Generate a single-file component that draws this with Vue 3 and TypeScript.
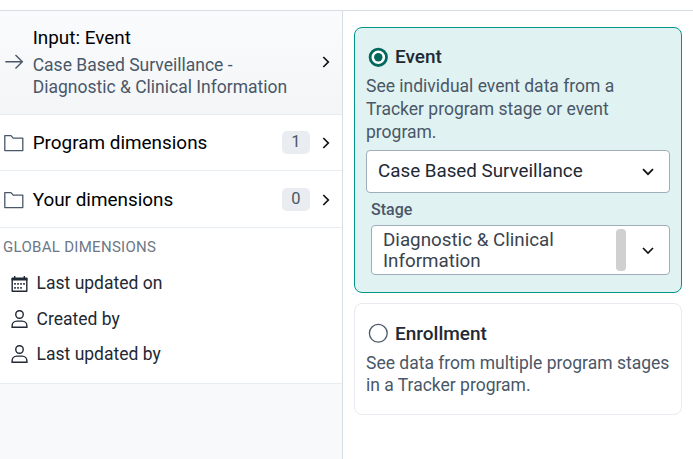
<script setup lang="ts">
interface Group {
  label: string
  count: number
}

interface Dimension {
  label: string
  icon: 'calendar' | 'user'
}

const groups: Group[] = [
  { label: 'Program dimensions', count: 1 },
  { label: 'Your dimensions', count: 0 },
]

const globals: Dimension[] = [
  { label: 'Last updated on', icon: 'calendar' },
  { label: 'Created by', icon: 'user' },
  { label: 'Last updated by', icon: 'user' },
]
</script>

<template>
  <div class="app">
    <div class="toolbar"></div>
    <div class="main">
      <aside class="sidebar">
        <div class="list">
          <div class="row input-row">
            <svg class="lead" width="20" height="20" viewBox="0 0 20 20" fill="none" stroke="#4a5768" stroke-width="1.4">
              <path d="M1.3 9.7H18.3M11.5 2.9L18.3 9.7L11.5 16.5" />
            </svg>
            <div class="row-text">
              <div class="row-title">Input: Event</div>
              <div class="row-sub">Case Based Surveillance -<br />Diagnostic &amp; Clinical Information</div>
            </div>
            <svg class="chev" width="8" height="14" viewBox="0 0 8 14" fill="none" stroke="#111" stroke-width="1.7">
              <path d="M1.3 2L6.3 7L1.3 12" />
            </svg>
          </div>
          <div v-for="g in groups" :key="g.label" class="row group-row">
            <svg class="lead" width="20" height="18" viewBox="0 0 20 18" fill="none" stroke="#4a5768" stroke-width="1.3">
              <path d="M.8 1.6H7L9.2 4.1H18.8V16.6H.8Z" stroke-linejoin="round" />
            </svg>
            <div class="row-title grow">{{ g.label }}</div>
            <span class="badge">{{ g.count }}</span>
            <svg class="chev" width="8" height="14" viewBox="0 0 8 14" fill="none" stroke="#111" stroke-width="1.7">
              <path d="M1.3 2L6.3 7L1.3 12" />
            </svg>
          </div>
          <div class="globals">
            <div class="caption">GLOBAL DIMENSIONS</div>
            <div v-for="d in globals" :key="d.label" class="item">
              <svg v-if="d.icon === 'calendar'" width="18" height="20" viewBox="0 0 18 20">
                <path d="M1.2 5.2H15.8V18.3H1.2Z" fill="none" stroke="#212934" stroke-width="1.4" stroke-linejoin="round" />
                <path d="M.6 5H16.4V7.6H.6ZM3 3H4.4V6H3ZM12.6 3H14V6H12.6Z" fill="#212934" />
                <path d="M6.2 10h1.6v1.7H6.2zM9.2 10h1.6v1.7H9.2zM12.2 10h1.6v1.7h-1.6zM3.2 10h1.6v1.7H3.2zM3.2 14h1.6v1.7H3.2zM6.2 14h1.6v1.7H6.2zM9.2 14h1.6v1.7H9.2z" fill="#212934" />
              </svg>
              <svg v-else width="18" height="20" viewBox="0 0 18 20" fill="none" stroke="#212934" stroke-width="1.4">
                <rect x="4.8" y="1.7" width="7.4" height="7.6" rx="3.5" />
                <path d="M1.1 18.3V17C1.1 14.2 3.1 12.1 5.9 12.1H11.1C13.9 12.1 15.9 14.2 15.9 17V18.3Z" />
              </svg>
              <span>{{ d.label }}</span>
            </div>
          </div>
        </div>
      </aside>
      <main class="content">
        <section class="card selected">
          <div class="radio-line">
            <svg width="20" height="20" viewBox="0 0 20 20">
              <circle cx="10.3" cy="10.3" r="8.2" fill="#fff" stroke="#00695c" stroke-width="2.8" />
              <circle cx="10.3" cy="10.3" r="4.2" fill="#00695c" />
            </svg>
            <span class="radio-label">Event</span>
          </div>
          <p class="desc">See individual event data from a<br />Tracker program stage or event<br />program.</p>
          <div class="select program">
            <span class="value">Case Based Surveillance</span>
            <svg width="14" height="8" viewBox="0 0 14 8" fill="none" stroke="#111" stroke-width="1.7"><path d="M2 1.2L7 6.2L12 1.2" /></svg>
          </div>
          <div class="field-label">Stage</div>
          <div class="select stage">
            <span class="value">Diagnostic &amp; Clinical<br />Information</span>
            <span class="thumb"></span>
            <svg width="14" height="8" viewBox="0 0 14 8" fill="none" stroke="#111" stroke-width="1.7"><path d="M2 2L7 7L12 2" /></svg>
          </div>
        </section>
        <section class="card plain">
          <div class="radio-line">
            <svg width="20" height="20" viewBox="0 0 20 20">
              <circle cx="10.3" cy="10.3" r="8.9" fill="#fff" stroke="#4a5768" stroke-width="1.3" />
            </svg>
            <span class="radio-label">Enrollment</span>
          </div>
          <p class="desc">See data from multiple program stages<br />in a Tracker program.</p>
        </section>
      </main>
    </div>
  </div>
</template>

<style>
body {
  margin: 0;
  background: #fff;
}
</style>

<style scoped>
.app {
  box-sizing: border-box;
  width: 693px;
  height: 459px;
  display: flex;
  flex-direction: column;
  overflow: hidden;
  font-family: Roboto, "Liberation Sans", sans-serif;
  color: #212934;
  background: #fff;
}
.app * {
  box-sizing: border-box;
}
.app svg {
  display: block;
  flex: none;
}
.toolbar {
  flex: none;
  height: 11px;
  border-bottom: 1px solid #d5dde5;
}
.main {
  flex: 1;
  display: flex;
}
.sidebar {
  width: 343px;
  flex: none;
  border-right: 1px solid #d5dde5;
  background: #f8f9fb;
}
.list {
  background: #fff;
  border-bottom: 1px solid #e8edf2;
  height: 373px;
}
.row {
  display: flex;
  align-items: center;
  padding: 0 12px 0 4px;
  border-bottom: 1px solid #e8edf2;
}
.row-title {
  font-size: 18.9px;
  line-height: 24px;
  color: #000;
}
.row-sub {
  font-size: 17.5px;
  line-height: 22px;
  color: #4a5768;
  white-space: nowrap;
}
.lead {
  margin-right: 8.7px;
}
.row-text,
.grow {
  flex: 1;
}
.input-row {
  height: 104px;
  padding-bottom: 1px;
  background: linear-gradient(#fafbfd, #f3f5f7);
}
.input-row .row-sub {
  margin-top: 4px;
}
.group-row {
  height: 56px;
}
.group-row + .group-row {
  height: 57px;
  padding-top: 1px;
}
.badge {
  width: 28px;
  height: 23px;
  margin-right: 12px;
  border-radius: 5px;
  background: #e9edf1;
  color: #4a5768;
  font-size: 16.5px;
  line-height: 21px;
  text-align: center;
}
.caption {
  padding: 8px 0 0 3px;
  margin-bottom: 7px;
  font-size: 15px;
  line-height: 22px;
  letter-spacing: 0.3px;
  color: #6c7787;
}
.item {
  display: flex;
  align-items: center;
  gap: 7.6px;
  height: 36px;
  padding-left: 11px;
  font-size: 17.5px;
}
.item:last-child {
  height: 34px;
}
.content {
  flex: 1;
  min-width: 0;
  display: flex;
  flex-direction: column;
  gap: 10px;
  padding: 16px 11px;
}
.card {
  border: 1px solid #e8eaf0;
  border-radius: 8px;
  padding: 0 11px;
}
.selected {
  height: 266px;
  background: #e0f2f1;
  border-color: #009688;
}
.plain {
  height: 112px;
}
.radio-line {
  display: flex;
  align-items: center;
  gap: 7px;
  height: 20px;
  margin: 19px 0 0 2px;
}
.radio-label {
  font-size: 19px;
  font-weight: 500;
  line-height: 20px;
  padding-bottom: 1px;
}
.plain .radio-label {
  padding: 1px 0 0;
}
.desc {
  margin: 8px 0 0;
  font-size: 17.5px;
  line-height: 23px;
  color: #4a5768;
  white-space: nowrap;
}
.plain .desc {
  margin-top: 9px;
  line-height: 22px;
}
.select {
  display: flex;
  align-items: center;
  padding: 0 14px 0 11px;
  border: 1px solid #a0adba;
  border-radius: 4px;
  background: #fff;
}
.value {
  flex: 1;
  font-size: 18.8px;
  line-height: 21px;
  white-space: nowrap;
}
.program {
  height: 43px;
  margin-top: 6px;
}
.field-label {
  margin: 7px 0 5px 5px;
  font-size: 16px;
  font-weight: 500;
  line-height: 20px;
  color: #4a5768;
}
.stage {
  height: 50px;
  margin-left: 5px;
}
.stage .value {
  padding-top: 2px;
  color: #3a434e;
}
.thumb {
  width: 10px;
  height: 42px;
  margin-right: 15px;
  border-radius: 4px;
  background: #d0d0d0;
}
</style>
